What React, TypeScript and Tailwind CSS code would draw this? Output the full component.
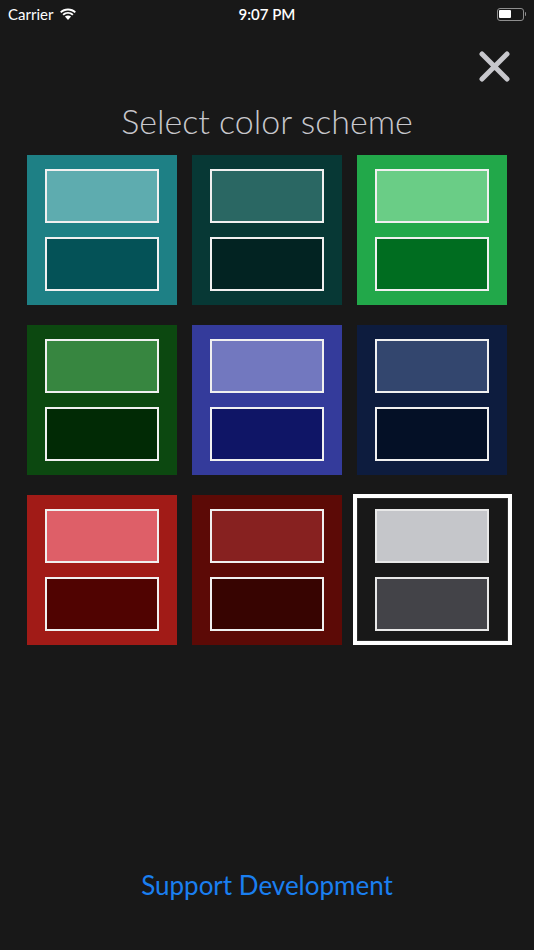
import React from 'react';

type Scheme = { bg: string; top: string; bottom: string; selected?: boolean };

const schemes: Scheme[] = [
  { bg: 'bg-[#1e8085]', top: 'bg-[#5eacaf]', bottom: 'bg-[#045257]' },
  { bg: 'bg-[#073835]', top: 'bg-[#2a6763]', bottom: 'bg-[#022322]' },
  { bg: 'bg-[#22a84a]', top: 'bg-[#6acd86]', bottom: 'bg-[#006d20]' },
  { bg: 'bg-[#0c4810]', top: 'bg-[#378640]', bottom: 'bg-[#012a05]' },
  { bg: 'bg-[#343b9b]', top: 'bg-[#7278bf]', bottom: 'bg-[#0f1566]' },
  { bg: 'bg-[#0d1c3e]', top: 'bg-[#33466e]', bottom: 'bg-[#041026]' },
  { bg: 'bg-[#a11b17]', top: 'bg-[#de5f68]', bottom: 'bg-[#500301]' },
  { bg: 'bg-[#5c0a06]', top: 'bg-[#872120]', bottom: 'bg-[#370401]' },
  { bg: 'bg-[#181818]', top: 'bg-[#c5c6ca]', bottom: 'bg-[#434348]', selected: true },
];

const StatusBar = () => (
  <div className="relative h-[28px] flex items-center px-[8px] text-white text-[15px]">
    <div className="flex items-center gap-[6px]">
      <span>Carrier</span>
      <svg width="18" height="13" viewBox="0 0 17 12" fill="white">
        <path d="M8.5 2.2c2.4 0 4.6.9 6.2 2.5l1.3-1.3C14.1 1.5 11.4.4 8.5.4S2.9 1.5 1 3.4l1.3 1.3C3.9 3.1 6.1 2.2 8.5 2.2z" />
        <path d="M8.5 5.4c1.5 0 2.9.6 3.9 1.6l1.3-1.3C12.3 4.4 10.5 3.6 8.5 3.6S4.7 4.4 3.3 5.7L4.6 7c1-1 2.4-1.6 3.9-1.6z" />
        <path d="M8.5 6.9c-1.1 0-2.1.4-2.9 1.1l2.9 3.3 2.9-3.3c-.8-.7-1.8-1.1-2.9-1.1z" />
      </svg>
    </div>
    <div className="absolute left-0 right-0 text-center font-semibold pointer-events-none">9:07 PM</div>
    <div className="ml-auto flex items-center">
      <div className="w-[27px] h-[13px] rounded-[3px] border border-[#8e8e8e] p-[1.5px] flex">
        <div className="w-[12px] h-full bg-white rounded-[1px]" />
      </div>
      <div className="w-[1.5px] h-[4px] bg-[#8e8e8e] rounded-r ml-[1px]" />
    </div>
  </div>
);

export default function App() {
  return (
    <div
      className="w-[534px] h-[950px] bg-[#181818] flex flex-col overflow-hidden"
      style={{ fontFamily: 'Lato, "Open Sans", sans-serif' }}
    >
      <StatusBar />
      <div className="flex justify-end pr-[24px] pt-[23px]">
        <svg width="31" height="31" viewBox="0 0 31 31">
          <path d="M3 3L28 28M28 3L3 28" stroke="#c7c7cc" strokeWidth="5" strokeLinecap="round" />
        </svg>
      </div>
      <h1 className="text-center text-[#c7c7cc] text-[34px] font-light mt-[19px] leading-[40px]">
        Select color scheme
      </h1>
      <div className="grid grid-cols-[150px_150px_150px] gap-x-[15px] gap-y-[20px] mx-auto mt-[14px]">
        {schemes.map((s, i) =>
          s.selected ? (
            <div
              key={i}
              className={`w-[159px] h-[151px] -ml-[4px] -mt-[1px] flex flex-col gap-[14px] pl-[18px] pr-[19px] pt-[11px] pb-[10px] border-4 border-white shadow-[inset_0_0_0_1px_#2e2e2e] ${s.bg}`}
            >
              <div className={`h-[54px] border-2 border-[#e8e8e8] ${s.top}`} />
              <div className={`h-[54px] border-2 border-[#e8e8e8] ${s.bottom}`} />
            </div>
          ) : (
            <div
              key={i}
              className={`w-[150px] h-[150px] flex flex-col gap-[14px] px-[18px] py-[14px] ${s.bg}`}
            >
              <div className={`h-[54px] border-2 border-[#f0f0f0] ${s.top}`} />
              <div className={`h-[54px] border-2 border-[#f0f0f0] ${s.bottom}`} />
            </div>
          )
        )}
      </div>
      <div className="mt-auto mb-[45px] text-center text-[#1a7ff0] text-[26px]">Support Development</div>
    </div>
  );
}
